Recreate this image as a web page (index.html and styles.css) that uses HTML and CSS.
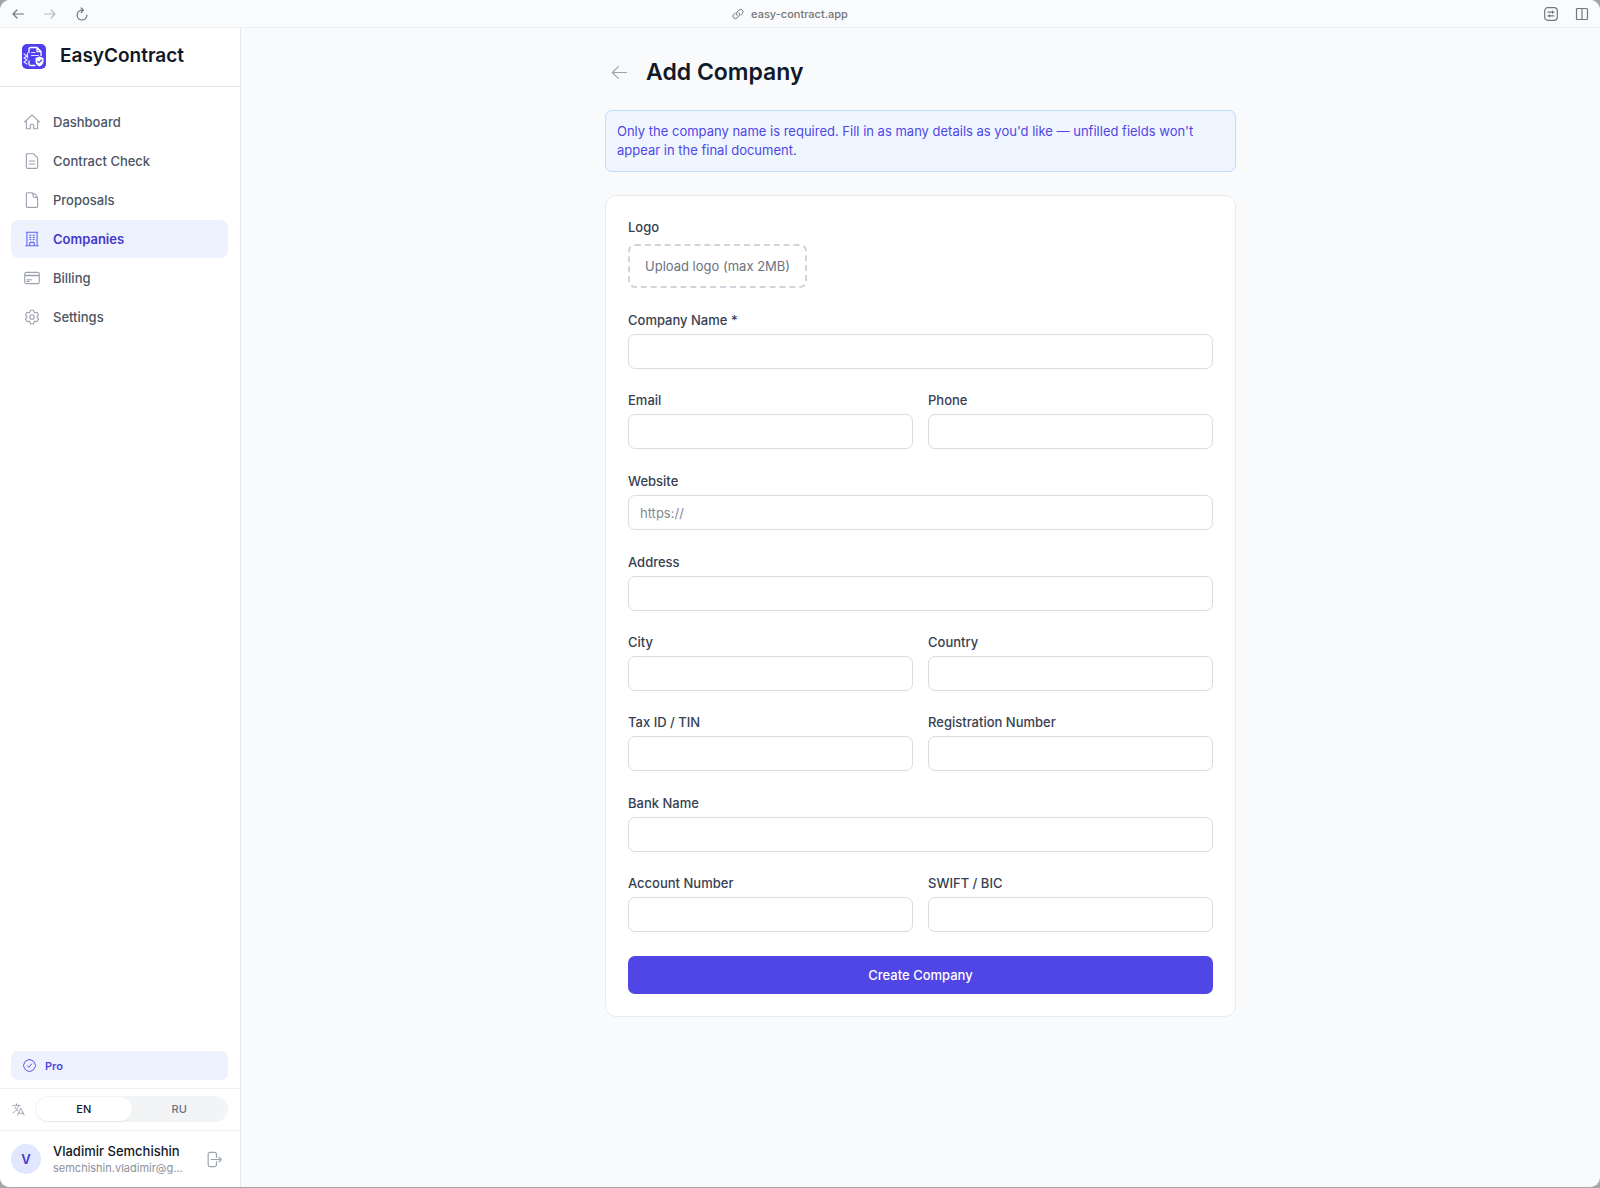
FILE: index.html
```html
<!DOCTYPE html>
<html lang="en">
<head>
    <meta charset="UTF-8">
    <meta name="viewport" content="width=device-width, initial-scale=1.0">
    <title>Add Company - EasyContract</title>
    <link rel="stylesheet" href="styles.css">
</head>
<body>
    <div class="window">
        <header class="topbar">
            <div class="topbar-group">
                <button type="button" aria-label="Back">
                    <svg width="14" height="14" viewBox="0 0 14 14"><path d="M12.5 7H2M6 3L2 7l4 4"/></svg>
                </button>
                <button type="button" class="muted" aria-label="Forward">
                    <svg width="14" height="14" viewBox="0 0 14 14"><path d="M1.5 7H12M8 3l4 4-4 4"/></svg>
                </button>
                <button type="button" aria-label="Reload">
                    <svg width="14" height="14" viewBox="0 0 14 14"><path d="M8 3.2H7a4.9 4.9 0 1 0 4.9 4.9M6.2 1l2.3 2.2-2.3 2.3"/></svg>
                </button>
            </div>
            <div class="address">
                <svg width="12" height="12" viewBox="0 0 12 12"><path d="M5 7.4a2.4 2.4 0 0 1 0-3.3l2-2a2.35 2.35 0 0 1 3.4 3.3L8.8 7M7 4.6a2.4 2.4 0 0 1 0 3.3l-2 2A2.35 2.35 0 0 1 1.6 6.6L3.2 5"/></svg>
                <span>easy-contract.app</span>
            </div>
            <div class="topbar-group topbar-right">
                <button type="button" aria-label="Page settings">
                    <svg width="14" height="14" viewBox="0 0 14 14"><rect x=".7" y=".7" width="12.6" height="12.6" rx="3"/><path d="M4 5.2h6M4 8.8h6M8.5 4.2v2M5.500 7.800v2"/></svg>
                </button>
                <button type="button" aria-label="Split view">
                    <svg width="14" height="14" viewBox="0 0 14 14"><rect x="1.5" y="1.5" width="11" height="11" rx="1"/><path d="M7 1.5v11"/></svg>
                </button>
            </div>
        </header>

        <div class="layout">
            <aside class="sidebar">
                <a href="#" class="brand">
                    <svg class="brand-logo" width="24" height="25" viewBox="0 0 24 25">
                        <rect width="24" height="25" rx="5" fill="#4f3ff0"/>
                        <path d="M7 8.500V5Q7 3.500 8.500 3.500H15l4 4v4M15 3.500v4h4M7 17v3q0 1.500 1.500 1.500H13" fill="none" stroke="#fff" stroke-width="1.300"/>
                        <path d="M9.500 8.500h3.500M9.500 11.500h7M2 10l3 2-3 2 3 2-3 2 3 2M5.500 9v5" fill="none" stroke="#e4e1ff" stroke-width="1.200"/>
                        <path d="M17.500 12.500l4 1.500v3.500c0 2.500-2 4-4 5-2-1-4-2.500-4-5V14z" fill="#fff"/>
                        <path d="M15.700 17.300l1.400 1.400 2.500-2.700" fill="none" stroke="#4f3ff0" stroke-width="1.200"/>
                    </svg>
                    <span>EasyContract</span>
                </a>

                <nav class="nav">
                    <a href="#">
                        <svg viewBox="0 0 24 24"><path d="m2.25 12 8.954-8.955c.44-.439 1.152-.439 1.591 0L21.75 12M4.5 9.75v10.125c0 .621.504 1.125 1.125 1.125H9.75v-4.875c0-.621.504-1.125 1.125-1.125h2.25c.621 0 1.125.504 1.125 1.125V21h4.125c.621 0 1.125-.504 1.125-1.125V9.75"/></svg>
                        Dashboard
                    </a>
                    <a href="#">
                        <svg viewBox="0 0 24 24"><path d="M14 2.25H5.6c-.6 0-1.1.5-1.1 1.1v17.3c0 .6.5 1.1 1.1 1.1h12.8c.6 0 1.1-.5 1.1-1.1V8zM8.25 12h7.5M8.25 16h7.5"/></svg>
                        Contract Check
                    </a>
                    <a href="#">
                        <svg viewBox="0 0 24 24"><path d="M19.5 14.25v-2.625a3.375 3.375 0 0 0-3.375-3.375h-1.5A1.125 1.125 0 0 1 13.5 7.125v-1.5a3.375 3.375 0 0 0-3.375-3.375M10.5 2.25H5.625c-.621 0-1.125.504-1.125 1.125v17.25c0 .621.504 1.125 1.125 1.125h12.75c.621 0 1.125-.504 1.125-1.125V11.25a9 9 0 0 0-9-9Z"/></svg>
                        Proposals
                    </a>
                    <a href="#" class="active" aria-current="page">
                        <svg viewBox="0 0 24 24"><path d="M3.75 21h16.5M4.5 3h15M5.25 3v18m13.5-18v18M9 6.75h1.5m-1.5 3h1.5m-1.5 3h1.5m3-6H15m-1.5 3H15m-1.5 3H15M9 21v-3.375c0-.621.504-1.125 1.125-1.125h3.75c.621 0 1.125.504 1.125 1.125V21"/></svg>
                        Companies
                    </a>
                    <a href="#">
                        <svg viewBox="0 0 24 24"><path d="M2.25 8.25h19.5M2.25 9h19.5m-16.5 5.25h6m-6 2.25h3m-3.75 3h15a2.25 2.25 0 0 0 2.25-2.25V6.75A2.25 2.25 0 0 0 19.5 4.5h-15a2.25 2.25 0 0 0-2.25 2.25v10.5A2.25 2.25 0 0 0 4.5 19.5Z"/></svg>
                        Billing
                    </a>
                    <a href="#">
                        <svg viewBox="0 0 24 24"><path d="M9.594 3.94c.09-.542.56-.94 1.11-.94h2.593c.55 0 1.02.398 1.11.94l.213 1.281c.063.374.313.686.645.87.074.04.147.083.22.127.325.196.72.257 1.075.124l1.217-.456a1.125 1.125 0 0 1 1.37.49l1.296 2.247a1.125 1.125 0 0 1-.26 1.431l-1.003.827c-.293.241-.438.613-.43.992a7.723 7.723 0 0 1 0 .255c-.008.378.137.75.43.991l1.004.827c.424.35.534.955.26 1.43l-1.298 2.247a1.125 1.125 0 0 1-1.369.491l-1.217-.456c-.355-.133-.75-.072-1.076.124a6.47 6.47 0 0 1-.22.128c-.331.183-.581.495-.644.869l-.213 1.281c-.09.543-.56.94-1.11.94h-2.594c-.55 0-1.019-.398-1.11-.94l-.213-1.281c-.062-.374-.312-.686-.644-.87a6.52 6.52 0 0 1-.22-.127c-.325-.196-.72-.257-1.076-.124l-1.217.456a1.125 1.125 0 0 1-1.369-.49l-1.297-2.247a1.125 1.125 0 0 1 .26-1.431l1.004-.827c.292-.24.437-.613.43-.991a6.932 6.932 0 0 1 0-.255c.007-.38-.138-.751-.43-.992l-1.004-.827a1.125 1.125 0 0 1-.26-1.43l1.297-2.247a1.125 1.125 0 0 1 1.37-.491l1.216.456c.356.133.751.072 1.076-.124.072-.044.146-.086.22-.128.332-.183.582-.495.644-.869z"/><circle cx="12" cy="12" r="3"/></svg>
                        Settings
                    </a>
                </nav>

                <a href="#" class="plan">
                    <svg viewBox="0 0 24 24"><path d="M8.500 12.500 11 15l4.500-5.500"/><path d="M12 2.500q2.500 0 4 1.500 3 .5 4 4 1.500 2 1.500 4t-1.500 4q-1 3.500-4 4-1.500 1.500-4 1.500T8 20q-3-.5-4-4-1.500-2-1.500-4T4 8q1-3.500 4-4 1.500-1.500 4-1.500z"/></svg>
                    Pro
                </a>

                <div class="language">
                    <svg viewBox="0 0 24 24"><path d="m10.5 21 5.25-11.25L21 21m-9-3h7.5M3 5.621a48.474 48.474 0 0 1 6-.371m0 0c1.12 0 2.233.038 3.334.114M9 5.25V3m3.334 2.364C11.176 10.658 7.69 15.08 3 17.502m9.334-12.138c.896.061 1.785.147 2.666.257m-4.589 8.495a18.023 18.023 0 0 1-3.827-5.802"/></svg>
                    <div class="language-switch">
                        <button type="button" class="selected">EN</button>
                        <button type="button">RU</button>
                    </div>
                </div>

                <div class="user">
                    <div class="avatar">V</div>
                    <div class="user-info">
                        <div class="user-name">Vladimir Semchishin</div>
                        <div class="user-email">semchishin.vladimir@g...</div>
                    </div>
                    <button type="button" class="logout" aria-label="Log out">
                        <svg viewBox="0 0 24 24"><path d="M15.75 9V5.25A2.25 2.25 0 0 0 13.5 3h-6a2.25 2.25 0 0 0-2.25 2.25v13.5A2.25 2.25 0 0 0 7.5 21h6a2.25 2.25 0 0 0 2.25-2.25V15m3 0 3-3m0 0-3-3m3 3H9"/></svg>
                    </button>
                </div>
            </aside>

            <main class="main">
                <div class="content">
                    <div class="page-header">
                        <a href="#" aria-label="Back to companies">
                            <svg viewBox="0 0 24 24"><path d="M10.5 19.5 3 12m0 0 7.5-7.5M3 12h18"/></svg>
                        </a>
                        <h1>Add Company</h1>
                    </div>

                    <p class="notice">Only the company name is required. Fill in as many details as you'd like — unfilled fields won't appear in the final document.</p>

                    <form class="card">
                        <div class="logo-field">
                            <span class="label">Logo</span>
                            <button type="button" class="upload">Upload logo (max 2MB)</button>
                        </div>
                        <div class="form-group">
                            <label for="name">Company Name *</label>
                            <input type="text" id="name" required>
                        </div>
                        <div class="form-row">
                            <div>
                                <label for="email">Email</label>
                                <input type="email" id="email">
                            </div>
                            <div>
                                <label for="phone">Phone</label>
                                <input type="tel" id="phone">
                            </div>
                        </div>
                        <div class="form-group">
                            <label for="website">Website</label>
                            <input type="url" id="website" placeholder="https://">
                        </div>
                        <div class="form-group">
                            <label for="address">Address</label>
                            <input type="text" id="address">
                        </div>
                        <div class="form-row">
                            <div>
                                <label for="city">City</label>
                                <input type="text" id="city">
                            </div>
                            <div>
                                <label for="country">Country</label>
                                <input type="text" id="country">
                            </div>
                        </div>
                        <div class="form-row">
                            <div>
                                <label for="taxId">Tax ID / TIN</label>
                                <input type="text" id="taxId">
                            </div>
                            <div>
                                <label for="regNumber">Registration Number</label>
                                <input type="text" id="regNumber">
                            </div>
                        </div>
                        <div class="form-group">
                            <label for="bank">Bank Name</label>
                            <input type="text" id="bank">
                        </div>
                        <div class="form-row">
                            <div>
                                <label for="account">Account Number</label>
                                <input type="text" id="account">
                            </div>
                            <div>
                                <label for="swift">SWIFT / BIC</label>
                                <input type="text" id="swift">
                            </div>
                        </div>
                        <button type="submit" class="submit">Create Company</button>
                    </form>
                </div>
            </main>
        </div>
    </div>
</body>
</html>
```

FILE: styles.css
```css
* {
    box-sizing: border-box;
}
body {
    margin: 0;
    background: #a3a5a6;
    color: #111827;
    font-family: Inter, sans-serif;
    font-size: 13px;
    line-height: 20px;
}
button, input {
    font: inherit;
    color: inherit;
}
button {
    padding: 0;
    border: none;
    background: none;
    cursor: pointer;
}
a {
    color: inherit;
    text-decoration: none;
}
svg {
    flex-shrink: 0;
    fill: none;
    stroke: currentColor;
    stroke-width: 1.5;
    stroke-linecap: round;
    stroke-linejoin: round;
}
.window {
    display: flex;
    flex-direction: column;
    min-height: 100vh;
    overflow: hidden;
    border-bottom: 1px solid #a3a5a6;
    border-radius: 10px;
    background: #f9fafb;
}

/* Browser bar */
.topbar {
    display: grid;
    grid-template-columns: 1fr auto 1fr;
    align-items: center;
    height: 28px;
    padding: 0 11px;
    border-bottom: 1px solid #eceef1;
    background: #fafbfc;
    color: #73767b;
}
.topbar svg {
    display: block;
    stroke-width: 1.2;
}
.topbar-group {
    display: flex;
    gap: 18px;
}
.topbar-right {
    justify-content: flex-end;
    gap: 17px;
}
.topbar .muted {
    color: #b9bcc1;
}
.address {
    display: flex;
    align-items: center;
    gap: 7px;
    margin-right: 20px;
    font-size: 11px;
    font-weight: 500;
}
.address svg {
    stroke-width: 1;
}
.layout {
    display: flex;
    flex: 1;
}

/* Sidebar */
.sidebar {
    display: flex;
    flex-direction: column;
    flex: 0 0 241px;
    border-right: 1px solid #e5e7eb;
    background: #fff;
}
.brand {
    display: flex;
    align-items: center;
    gap: 14px;
    height: 59px;
    padding: 0 22px 2px;
    border-bottom: 1px solid #e5e7eb;
    font-size: 19px;
    font-weight: 600;
}
.brand-logo {
    stroke: none;
}
.nav {
    display: flex;
    flex-direction: column;
    flex: 1;
    gap: 1px;
    padding: 16px 12px 16px 11px;
}
.nav a {
    display: flex;
    align-items: center;
    gap: 12px;
    padding: 9px 12px;
    border-radius: 7px;
    color: #4b5563;
    font-weight: 500;
}
.nav svg {
    width: 18px;
    height: 18px;
    color: #9ca3af;
}
.nav .active {
    background: #eef2ff;
    color: #4338ca;
    font-weight: 600;
}
.nav .active svg {
    color: #6366f1;
}
.plan {
    display: flex;
    align-items: center;
    gap: 8px;
    height: 29px;
    margin: 0 12px 8px 11px;
    padding: 0 11px;
    border-radius: 7px;
    background: #eef2ff;
    color: #4f46e5;
    font-size: 11px;
    font-weight: 600;
}
.plan svg {
    width: 15px;
    height: 15px;
}
.language {
    display: flex;
    align-items: center;
    gap: 9px;
    padding: 7px 12px 8px 11px;
    border-top: 1px solid #f0f1f4;
}
.language svg {
    width: 15px;
    height: 15px;
    color: #9ca3af;
}
.language-switch {
    display: flex;
    flex: 1;
    padding: 1px;
    border-radius: 13px;
    background: #f3f4f6;
}
.language-switch button {
    flex: 1;
    height: 24px;
    border-radius: 12px;
    color: #6b7280;
    font-size: 11px;
    font-weight: 500;
}
.language-switch .selected {
    background: #fff;
    color: #111827;
    box-shadow: 0 1px 2px rgba(0,0,0,0.06);
}
.user {
    display: flex;
    align-items: center;
    gap: 12px;
    padding: 11px 17px 11px 11px;
    border-top: 1px solid #f0f1f4;
}
.avatar {
    width: 30px;
    height: 30px;
    border-radius: 50%;
    background: #e0e7ff;
    color: #4338ca;
    font-weight: 600;
    line-height: 30px;
    text-align: center;
}
.user-info {
    flex: 1;
    min-width: 0;
    white-space: nowrap;
}
.user-name {
    font-weight: 500;
    line-height: 18px;
}
.user-email {
    color: #8b919c;
    font-size: 11px;
    line-height: 16px;
}
.logout {
    color: #9ca3af;
}
.logout svg {
    display: block;
    width: 19px;
    height: 19px;
}

/* Page */
.main {
    flex: 1;
    padding: 30px;
}
.content {
    max-width: 631px;
    margin: 0 auto;
}
.page-header {
    display: flex;
    align-items: center;
    gap: 17px;
    padding-left: 5px;
    color: #9ca3af;
}
.page-header svg {
    display: block;
    width: 19px;
    height: 19px;
}
h1 {
    margin: 0;
    color: #111827;
    font-size: 23px;
    font-weight: 600;
    line-height: 28px;
}
.notice {
    margin: 24px 0 23px;
    padding: 11px;
    border: 1px solid #bfdbfe;
    border-radius: 7px;
    background: #eff6ff;
    color: #4f46e5;
    line-height: 19px;
}
.card {
    padding: 21px 22px 22px;
    border: 1px solid #e9ebee;
    border-radius: 11px;
    background: #fff;
}
label, .label {
    display: block;
    margin-bottom: 4px;
    color: #374151;
    font-weight: 500;
}
.logo-field .label {
    margin-bottom: 7px;
}
.upload {
    display: block;
    padding: 10px 15px;
    border: 2px dashed #d1d5db;
    border-radius: 7px;
    color: #6b7280;
}
.form-group {
    margin-top: 22px;
}
.form-row {
    display: grid;
    grid-template-columns: 1fr 1fr;
    gap: 15px;
    margin-top: 21px;
}
input {
    display: block;
    width: 100%;
    height: 35px;
    padding: 0 11px;
    border: 1px solid #d9dce1;
    border-radius: 7px;
    background: #fff;
}
input::placeholder {
    color: #858b96;
}
.submit {
    display: block;
    width: 100%;
    height: 38px;
    margin-top: 24px;
    border-radius: 7px;
    background: #4f46e5;
    color: #fff;
    font-weight: 500;
}
```
